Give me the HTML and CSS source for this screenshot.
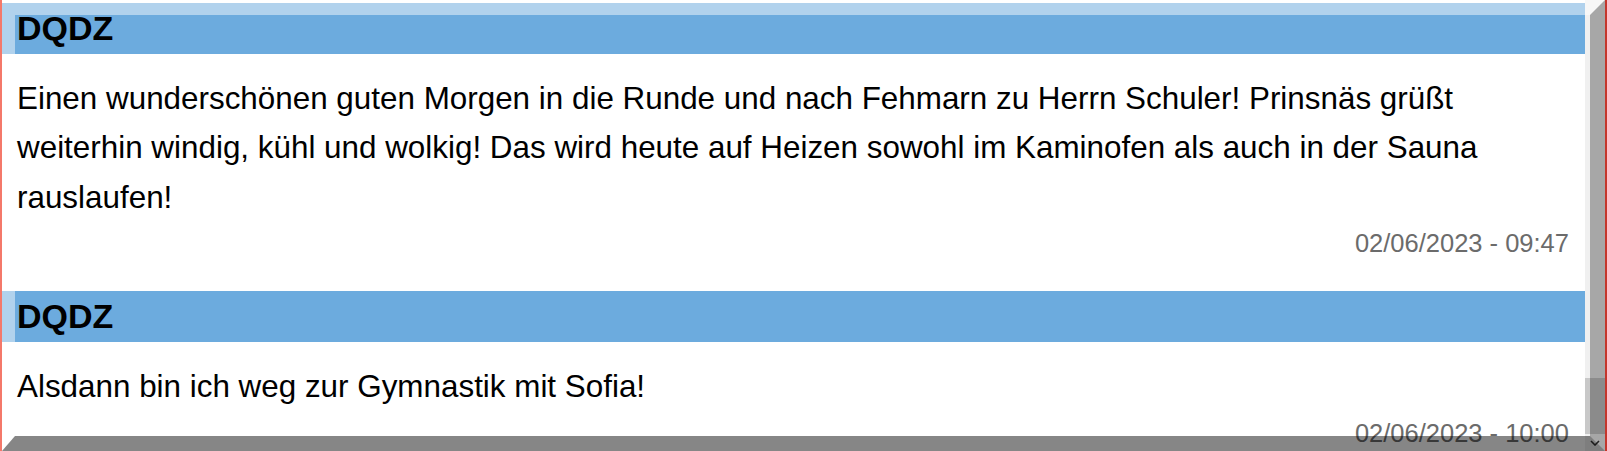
FILE: index.html
```html
<!DOCTYPE html>
<html lang="de">
<head>
<meta charset="utf-8">
<title>Nachrichten</title>
<link rel="stylesheet" href="styles.css">
</head>
<body>
<div class="frame">
  <div class="list">
    <article class="msg">
      <h2 class="msg-head">DQDZ</h2>
      <p class="msg-text">Einen wunderschönen guten Morgen in die Runde und nach Fehmarn zu Herrn Schuler! Prinsnäs grüßt weiterhin windig, kühl und wolkig! Das wird heute auf Heizen sowohl im Kaminofen als auch in der Sauna rauslaufen!</p>
      <div class="msg-date">02/06/2023 - 09:47</div>
    </article>
    <article class="msg">
      <h2 class="msg-head">DQDZ</h2>
      <p class="msg-text">Alsdann bin ich weg zur Gymnastik mit Sofia!</p>
      <div class="msg-date">02/06/2023 - 10:00</div>
    </article>
  </div>
  <div class="scrollbar">
    <div class="thumb"></div>
    <div class="arrow">
      <svg width="10" height="6" viewBox="0 0 10 6"><path d="M1 1 L5 5 L9 1" fill="none" stroke="#333" stroke-width="1.6"/></svg>
    </div>
  </div>
  <div class="bevel"></div>
</div>
</body>
</html>
```

FILE: styles.css
```css
html, body {
  margin: 0;
  padding: 0;
  background: #ffffff;
}

body {
  font-family: "Liberation Sans", Arial, sans-serif;
  overflow: hidden;
}

.frame {
  position: relative;
  display: flex;
  width: 1607px;
  height: 451px;
  box-sizing: border-box;
  border-left: 2px solid #f4786a;
  border-right: 2px solid #c4362c;
  overflow: hidden;
  background: #ffffff;
}

.list {
  flex: 1;
  padding-top: 3px;
  overflow: hidden;
}

.msg {
  margin-bottom: 33px;
}

.msg-head {
  margin: 0;
  height: 51px;
  padding: 0 15px;
  background: #6cabde;
  color: #000;
  font-size: 34px;
  font-weight: bold;
  line-height: 51px;
}

.msg-text {
  margin: 20px 0 0;
  padding: 0 20px 0 15px;
  font-size: 31.4px;
  line-height: 49.4px;
  color: #000;
}

.msg-date {
  margin-top: 7px;
  padding-right: 16px;
  text-align: right;
  font-size: 25.5px;
  color: #6b6b6b;
}

.scrollbar {
  width: 20px;
  flex: none;
  background: #f0f0f0;
  display: flex;
  flex-direction: column;
  justify-content: flex-end;
}

.thumb {
  height: 56px;
  background: #c8c8c8;
}

.arrow {
  height: 17px;
  display: flex;
  align-items: center;
  justify-content: center;
  background: #f0f0f0;
}

.bevel {
  position: absolute;
  top: 0;
  left: 0;
  right: 0;
  bottom: 0;
  border-style: solid;
  border-width: 15px 15px 15px 13px;
  border-top-color: rgba(255, 255, 255, 0.47);
  border-left-color: rgba(255, 255, 255, 0.47);
  border-right-color: rgba(0, 0, 0, 0.3);
  border-bottom-color: rgba(0, 0, 0, 0.47);
  pointer-events: none;
}
```
